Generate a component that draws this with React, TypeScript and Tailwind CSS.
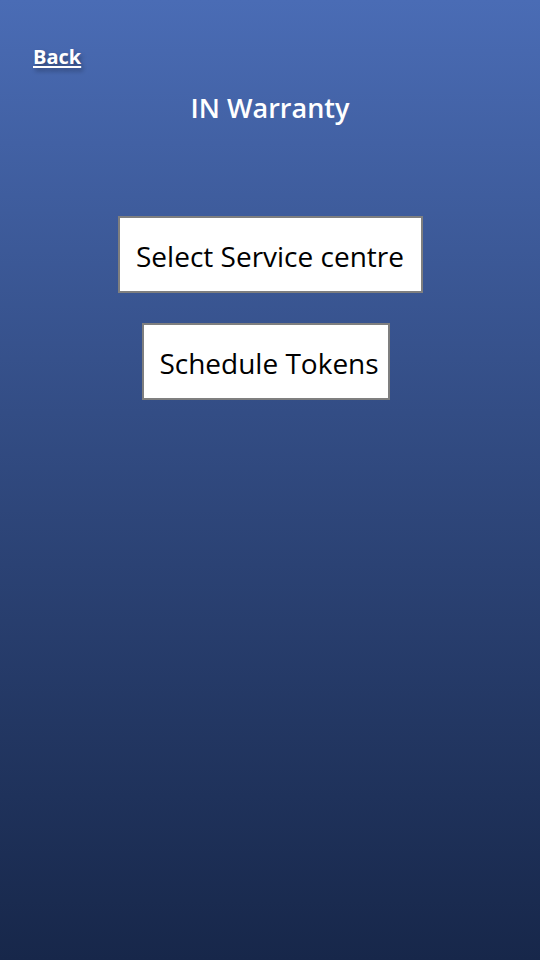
import React from "react";

const App = () => {
  return (
    <div
      className="flex flex-col w-[540px] h-[960px] bg-gradient-to-b from-[#4a6cb5] to-[#17274a] text-white"
      style={{ fontFamily: '"Open Sans", "Noto Sans", sans-serif' }}
    >
      <div className="pt-[42px] pl-[33px]">
        <a
          href="#"
          className="text-[20px] font-bold underline underline-offset-2 text-white [text-shadow:2px_3px_4px_rgba(0,0,0,0.35)]"
        >
          Back
        </a>
      </div>

      <h1 className="mt-[16px] text-center text-[27px] font-semibold">IN Warranty</h1>

      <div className="flex flex-col items-center gap-[30px] mt-[87px]">
        <button className="w-[305px] h-[77px] pt-[4px] bg-white border-2 border-[#7f7f7f] text-black text-[28px] font-medium">
          Select Service centre
        </button>
        <button className="w-[248px] h-[77px] pt-[4px] pl-[6px] mr-[8px] bg-white border-2 border-[#7f7f7f] text-black text-[28px] font-medium">
          Schedule Tokens
        </button>
      </div>
    </div>
  );
};

export default App;
